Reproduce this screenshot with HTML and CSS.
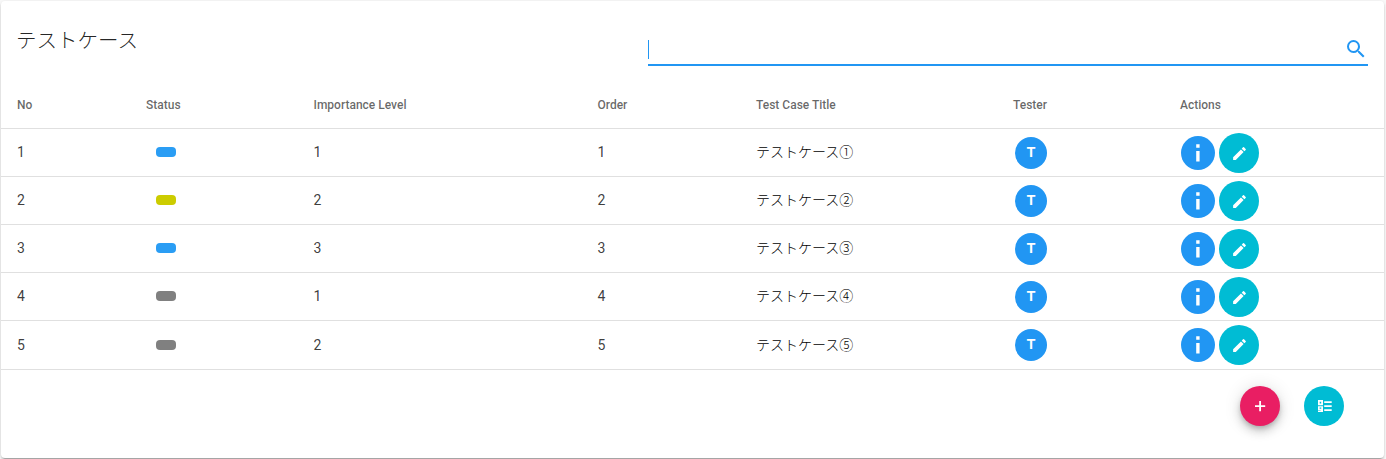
FILE: index.html
```html
<!DOCTYPE html>
<html lang="ja">
<head>
<meta charset="utf-8">
<title>テストケース</title>
<link rel="stylesheet" href="styles.css">
</head>
<body>
<svg class="defs" width="0" height="0">
  <symbol id="info" viewBox="0 0 34 34"><path d="M15.2 8.300h3.400v3.400h-3.400zM15.2 15h3.400v10.500h-3.400z"/></symbol>
  <symbol id="pencil" viewBox="0 0 24 24"><path d="M3 17.25V21h3.75L17.81 9.94l-3.75-3.75L3 17.25zM20.71 7.04a1 1 0 0 0 0-1.41l-2.34-2.34a1 1 0 0 0-1.41 0l-1.83 1.83 3.75 3.75 1.83-1.83z"/></symbol>
</svg>
<main class="card">
  <header class="card-title">
    <h1>テストケース</h1>
    <div class="search">
      <span class="caret"></span>
      <svg class="search-icon" viewBox="0 0 24 24"><path d="M9.5 3A6.5 6.5 0 0 1 16 9.5c0 1.61-.59 3.09-1.56 4.23l.27.27h.79l5 5-1.5 1.5-5-5v-.79l-.27-.27A6.516 6.516 0 0 1 9.5 16a6.5 6.5 0 0 1 0-13m0 2a4.5 4.5 0 1 0 0 9 4.5 4.5 0 0 0 0-9z"/></svg>
    </div>
  </header>
  <section class="table">
    <div class="row head"><span>No</span><span>Status</span><span>Importance Level</span><span>Order</span><span>Test Case Title</span><span>Tester</span><span>Actions</span></div>
    <div class="row"><span>1</span><span><i class="chip blue"></i></span><span>1</span><span>1</span><span class="name">テストケース①</span><span><b class="avatar">T</b></span><span class="actions"><svg class="info"><use href="#info"/></svg><span class="edit"><svg><use href="#pencil"/></svg></span></span></div>
    <div class="row"><span>2</span><span><i class="chip yellow"></i></span><span>2</span><span>2</span><span class="name">テストケース②</span><span><b class="avatar">T</b></span><span class="actions"><svg class="info"><use href="#info"/></svg><span class="edit"><svg><use href="#pencil"/></svg></span></span></div>
    <div class="row"><span>3</span><span><i class="chip blue"></i></span><span>3</span><span>3</span><span class="name">テストケース③</span><span><b class="avatar">T</b></span><span class="actions"><svg class="info"><use href="#info"/></svg><span class="edit"><svg><use href="#pencil"/></svg></span></span></div>
    <div class="row"><span>4</span><span><i class="chip grey"></i></span><span>1</span><span>4</span><span class="name">テストケース④</span><span><b class="avatar">T</b></span><span class="actions"><svg class="info"><use href="#info"/></svg><span class="edit"><svg><use href="#pencil"/></svg></span></span></div>
    <div class="row last"><span>5</span><span><i class="chip grey"></i></span><span>2</span><span>5</span><span class="name">テストケース⑤</span><span><b class="avatar">T</b></span><span class="actions"><svg class="info"><use href="#info"/></svg><span class="edit"><svg><use href="#pencil"/></svg></span></span></div>
  </section>
  <footer class="footer">
    <span class="fab add"><svg viewBox="0 0 16 16"><path d="M7.2 3h1.8v4.200H13.200v1.800H9V13.200H7.200V9H3V7.200h4.200z"/></svg></span>
    <span class="fab list"><svg viewBox="0 0 16 16"><path fill-rule="evenodd" d="M2 2h5v5.300H2zM3.700 3.700v1.900h1.500V3.700zM2 8.300h5V14H2zM3.600 9.600v1.200h1.700V9.600zM2 11.900v.7h2.600v-.7zM8.200 3.200h7.500v1.700H8.200zM8.200 7.200h7.500v1.700H8.200zM8.200 11.200h7.500v1.700H8.200z"/></svg></span>
  </footer>
</main>
</body>
</html>
```
FILE: styles.css
```css
* { box-sizing: border-box; }
body { margin: 0; padding: 1px 2px 1px 1px; height: 459px; overflow: hidden; background: #fafafa; font-family: Roboto, "Noto Sans CJK JP", sans-serif; color: rgba(0,0,0,.87); }
.defs { display: block; height: 0; }
.card { height: 457px; background: #fff; border-radius: 4px; box-shadow: 0 3px 1px -2px rgba(0,0,0,.2), 0 2px 2px 0 rgba(0,0,0,.14), 0 1px 5px 0 rgba(0,0,0,.12); }
.card-title { height: 79px; padding: 16px 16px 0 15px; display: flex; justify-content: space-between; }
h1 { margin: 8px 0 0; font-size: 20.5px; line-height: 32px; font-weight: 300; }
.search { width: 720px; height: 49px; padding-top: 20px; border-bottom: 2px solid #2196f3; display: flex; justify-content: space-between; }
.caret { width: 1px; height: 19px; margin-top: 3px; background: #2196f3; }
.search-icon { width: 24px; height: 24px; fill: #2196f3; }
.row { display: grid; grid-template-columns: 129px 167.500px 284px 158.500px 257px 167px 1fr; align-items: center; height: 48px; padding: 0 0 1px 16px; border-bottom: 1px solid #e0e0e0; font-size: 14px; line-height: 20px; color: rgba(0,0,0,.77); }
.row.head { height: 49px; padding: 2px 0 0 16px; font-size: 12px; font-weight: 500; color: rgba(0,0,0,.6); }
.row.last { height: 49px; padding-bottom: 0; }
.name { font-weight: 300; color: #000; }
.chip { display: block; width: 20px; height: 10px; margin-left: 10px; border-radius: 4px; }
.blue { background: #2a9df4; }
.yellow { background: #cccc00; }
.grey { background: #808080; }
.avatar { display: block; width: 32px; height: 32px; margin: 2px 0 0 2px; border-radius: 50%; background: #2196f3; color: #fff; text-align: center; font: bold 14px/31px "Liberation Sans", sans-serif; }
.actions { display: flex; align-items: center; gap: 4px; margin: 2px 0 0 1px; }
.last .avatar, .last .actions { margin-top: 0; }
.info { width: 34px; height: 34px; border-radius: 50%; background: #2196f3; fill: #fff; }
.edit, .fab { display: flex; align-items: center; justify-content: center; width: 40px; height: 40px; border-radius: 50%; background: #00bcd4; fill: #fff; }
.edit svg { width: 17px; height: 17px; }
.fab svg { width: 16px; height: 16px; }
.footer { display: flex; justify-content: flex-end; gap: 24px; padding: 16px 40px 0; }
.add { background: #e91e63; box-shadow: 0 3px 5px -1px rgba(0,0,0,.2), 0 6px 10px 0 rgba(0,0,0,.14), 0 1px 18px 0 rgba(0,0,0,.12); }
```
